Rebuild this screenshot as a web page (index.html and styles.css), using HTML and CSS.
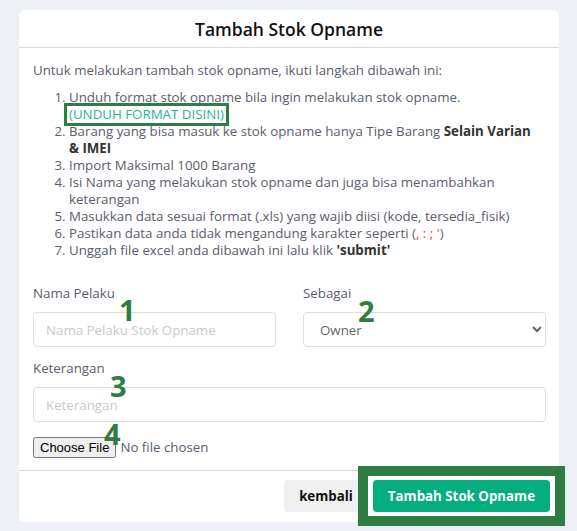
FILE: index.html
```html
<!DOCTYPE html>
<html>
<head>
    <title>Tambah Stok Opname</title>
    <meta charset="UTF-8">
    <meta name="viewport" content="width=device-width, initial-scale=1.0">
    <link rel="stylesheet" href="styles.css">
</head>
<body>
<div class="modal">
    <header class="modal-header">
        <h1 class="modal-title">Tambah Stok Opname</h1>
    </header>
    <div class="modal-body">
        <p class="intro">Untuk melakukan tambah stok opname, ikuti langkah dibawah ini:</p>
        <ol class="steps">
            <li>Unduh format stok opname bila ingin melakukan stok opname.<br><a class="download" href="#">(UNDUH FORMAT DISINI)</a></li>
            <li>Barang yang bisa masuk ke stok opname hanya Tipe Barang <b>Selain Varian &amp; IMEI</b></li>
            <li>Import Maksimal 1000 Barang</li>
            <li>Isi Nama yang melakukan stok opname dan juga bisa menambahkan keterangan</li>
            <li>Masukkan data sesuai format (.xls) yang wajib diisi (kode, tersedia_fisik)</li>
            <li>Pastikan data anda tidak mengandung karakter seperti (<span class="danger">, : ; '</span>)</li>
            <li>Unggah file excel anda dibawah ini lalu klik <b>'submit'</b></li>
        </ol>

        <div class="form-row">
            <div class="form-group">
                <label for="pelaku">Nama Pelaku</label>
                <input id="pelaku" class="form-control" type="text" placeholder="Nama Pelaku Stok Opname">
                <span class="marker marker-1">1</span>
            </div>
            <div class="form-group">
                <label for="sebagai">Sebagai</label>
                <select id="sebagai" class="form-control">
                    <option>Owner</option>
                    <option>Karyawan</option>
                </select>
                <span class="marker marker-2">2</span>
            </div>
        </div>

        <div class="form-group">
            <label for="keterangan">Keterangan</label>
            <input id="keterangan" class="form-control" type="text" placeholder="Keterangan">
            <span class="marker marker-3">3</span>
        </div>

        <div class="file-row">
            <input class="file-input" type="file" accept=".xls,.xlsx">
            <span class="marker marker-4">4</span>
        </div>
    </div>
    <footer class="modal-footer">
        <button class="btn btn-light" type="button">kembali</button>
        <span class="highlight">
            <button class="btn btn-primary" type="submit">Tambah Stok Opname</button>
        </span>
    </footer>
</div>
</body>
</html>
```

FILE: styles.css
```css
body {
    margin: 0;
    padding: 10px 18px 9px 19px;
    background-color: #edf1f5;
    color: #5a5d6c;
    font-family: "Open Sans", Arial, sans-serif;
    font-size: 13.3px;
}

.modal {
    width: 540px;
    background: #fff;
    border-radius: 6px;
}

.modal-header {
    height: 37px;
    display: flex;
    align-items: center;
    justify-content: center;
    border-bottom: 1px solid #d9d9d9;
}

.modal-title {
    margin: 0;
    font-size: 17.5px;
    font-weight: 600;
    color: #111;
}

.modal-body {
    padding: 14px 13px 12px 14px;
    line-height: 17px;
}

.intro {
    margin: 0 0 10px;
}

.steps {
    margin: 0 0 26px;
    padding: 0 6px 0 36px;
}

.steps b {
    color: #333;
}

.download {
    display: inline-block;
    margin-left: -2px;
    padding: 0 2px;
    color: #2cb489;
    text-decoration: none;
    outline: 3px solid #2e7d43;
}

.danger {
    color: #ef3a3a;
}

.form-row {
    display: grid;
    grid-template-columns: 1fr 1fr;
    column-gap: 27px;
}

.form-group {
    position: relative;
    margin-bottom: 13px;
}

.form-group label {
    display: block;
    margin-bottom: 10px;
}

.form-control {
    display: block;
    box-sizing: border-box;
    width: 100%;
    height: 35px;
    padding: 0 12px;
    border: 1px solid #dedede;
    border-radius: 4px;
    background: #fff;
    color: #666;
    font-family: inherit;
    font-size: 13.3px;
}

.form-control::placeholder {
    color: #c9c9c9;
}

.file-row {
    position: relative;
    padding-top: 2px;
}

.file-input {
    color: #5a5d6c;
    font-family: inherit;
    font-size: 13.3px;
}

.file-input::file-selector-button {
    margin-right: 4px;
    padding: 1px 5px;
    font-family: "Liberation Sans", Arial, sans-serif;
    font-size: 13px;
}

/* green annotation numbers drawn over the form */
.marker {
    position: absolute;
    color: #2e7d43;
    font-size: 29px;
    font-weight: 700;
    line-height: 29px;
}

.marker-1 { left: 86px; top: 10px; }
.marker-2 { left: 55px; top: 11px; }
.marker-3 { left: 77px; top: 11px; }
.marker-4 { left: 71px; top: -16px; }

.modal-footer {
    display: flex;
    align-items: center;
    justify-content: flex-end;
    gap: 5px;
    padding: 9px 9px 10px;
    border-top: 1px solid #d9d9d9;
}

.btn {
    height: 32px;
    padding: 0 15px;
    border: none;
    border-radius: 4px;
    font-family: inherit;
    font-size: 13.3px;
    font-weight: 700;
}

.btn-light {
    background: #f0f0f0;
    color: #111;
}

.btn-primary {
    display: block;
    background: #05ad7f;
    color: #fff;
}

/* square green annotation frame round the submit button */
.highlight {
    display: block;
    margin: -14px -15px;
    padding: 4px 5px;
    border: 10px solid #2e7d43;
    background: #fff;
}
```
